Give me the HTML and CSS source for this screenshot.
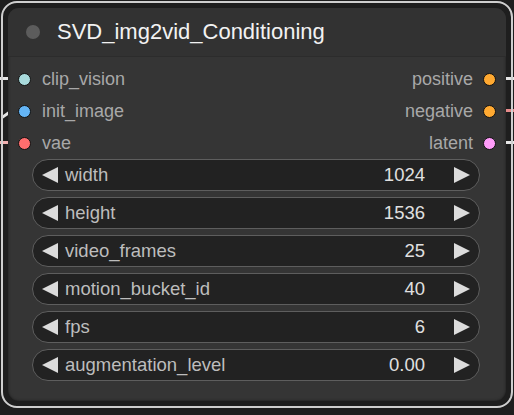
FILE: index.html
```html
<!DOCTYPE html>
<html lang="en">
<head>
  <meta charset="UTF-8">
  <title>SVD_img2vid_Conditioning</title>
  <link rel="stylesheet" href="styles.css">
</head>
<body>

  <div class="wire wire-l1"></div>
  <div class="wire wire-l2"></div>
  <div class="wire wire-l3"></div>
  <div class="wire wire-r1"></div>
  <div class="wire wire-r2"></div>
  <div class="wire wire-r3"></div>

  <div class="frame">
    <div class="node">
      <div class="node-title">
        <span class="title-dot"></span>
        <span class="title-text">SVD_img2vid_Conditioning</span>
      </div>

      <div class="slots">
        <div class="slot-row">
          <div class="slot in"><span class="dot teal"></span>clip_vision</div>
          <div class="slot out">positive<span class="dot orange"></span></div>
        </div>
        <div class="slot-row">
          <div class="slot in"><span class="dot blue"></span>init_image</div>
          <div class="slot out">negative<span class="dot orange"></span></div>
        </div>
        <div class="slot-row">
          <div class="slot in"><span class="dot red"></span>vae</div>
          <div class="slot out">latent<span class="dot pink"></span></div>
        </div>
      </div>

      <div class="widgets">
        <div class="widget"><span class="arrow left"></span><span class="w-label">width</span><span class="w-value">1024</span><span class="arrow right"></span></div>
        <div class="widget"><span class="arrow left"></span><span class="w-label">height</span><span class="w-value">1536</span><span class="arrow right"></span></div>
        <div class="widget"><span class="arrow left"></span><span class="w-label">video_frames</span><span class="w-value">25</span><span class="arrow right"></span></div>
        <div class="widget"><span class="arrow left"></span><span class="w-label">motion_bucket_id</span><span class="w-value">40</span><span class="arrow right"></span></div>
        <div class="widget"><span class="arrow left"></span><span class="w-label">fps</span><span class="w-value">6</span><span class="arrow right"></span></div>
        <div class="widget"><span class="arrow left"></span><span class="w-label">augmentation_level</span><span class="w-value">0.00</span><span class="arrow right"></span></div>
      </div>
    </div>
  </div>

</body>
</html>
```

FILE: styles.css
```css
body {
  margin: 0;
  background-color: #1e1e1e;
  font-family: 'Liberation Sans', Arial, sans-serif;
  width: 514px;
  height: 415px;
  overflow: hidden;
  position: relative;
}

.frame {
  margin: 1px 1px 0 1px;
  border: 2px solid #cfcfcf;
  border-radius: 16px;
  padding: 5px;
  box-sizing: border-box;
  height: 407px;
  position: relative;
  z-index: 1;
}

.node {
  background-color: #353535;
  border-radius: 11px;
  height: 100%;
  overflow: hidden;
  box-shadow: inset 0 0 3px rgba(0,0,0,0.5);
}

.node-title {
  height: 49px;
  display: flex;
  align-items: center;
  background-color: #323232;
  border-bottom: 1px solid #2c2c2c;
  box-sizing: border-box;
}

.title-dot {
  width: 14px;
  height: 14px;
  border-radius: 50%;
  background-color: #5c5c5c;
  margin-left: 18px;
  margin-right: 17px;
}

.title-text {
  color: #f2f2f2;
  font-size: 22px;
  padding-bottom: 1px;
}

.slots {
  padding-top: 6px;
}

.slot-row {
  display: flex;
  justify-content: space-between;
  height: 32px;
  align-items: center;
}

.slot {
  display: flex;
  align-items: center;
  color: #a8a8a8;
  font-size: 18px;
}

.slot.in .dot {
  margin-left: 10px;
  margin-right: 11px;
}

.slot.out .dot {
  margin-left: 10px;
  margin-right: 10px;
}

.dot {
  width: 13px;
  height: 13px;
  border-radius: 50%;
  border: 1px solid #111;
  box-sizing: border-box;
}

.teal { background-color: #a8dadc; }
.blue { background-color: #64b5f6; }
.red { background-color: #ff6e6e; }
.orange { background-color: #ffa931; }
.pink { background-color: #ff9cf9; }

.widgets {
  display: flex;
  flex-direction: column;
  gap: 6px;
  padding: 0 26px 0 24px;
}

.widget {
  height: 32px;
  box-sizing: border-box;
  border: 1px solid #5e5e5e;
  border-radius: 16px;
  background-color: #222;
  display: flex;
  align-items: center;
  padding: 0 9px;
  font-size: 18.5px;
}

.w-label {
  color: #bdbdbd;
  flex: 1;
}

.w-value {
  color: #e0e0e0;
  margin-right: 29px;
}

.arrow {
  width: 0;
  height: 0;
  border-top: 8.5px solid transparent;
  border-bottom: 8.5px solid transparent;
}

.arrow.left {
  border-right: 16px solid #dcdcdc;
  margin-right: 7px;
}

.arrow.right {
  border-left: 16px solid #dcdcdc;
}

.wire {
  position: absolute;
  height: 3px;
  background-color: #e6e6e6;
  z-index: 0;
  width: 12px;
}

.wire-l1 { left: 0; top: 77px; }
.wire-l2 { left: 0; top: 109px; transform: rotate(-35deg); transform-origin: right center; }
.wire-l3 { left: 0; top: 141px; background-color: #f0b0b0; }
.wire-r1 { right: 0; top: 77px; }
.wire-r2 { right: 0; top: 109px; background-color: #e88a8a; }
.wire-r3 { right: 0; top: 141px; }
```
